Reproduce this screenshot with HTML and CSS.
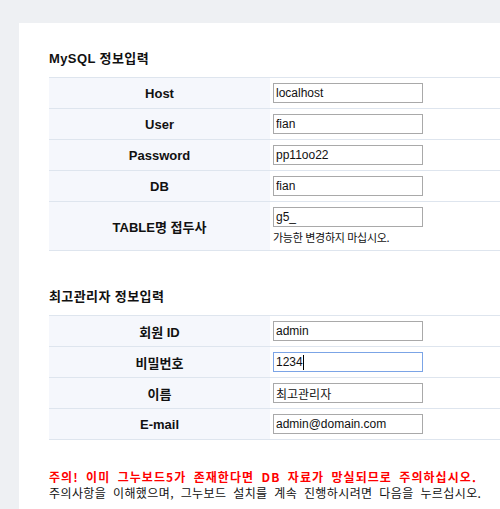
FILE: index.html
```html
<!DOCTYPE html>
<html lang="ko">
<head>
<meta charset="utf-8">
<title>그누보드5 설치</title>
<link rel="stylesheet" href="styles.css">
</head>
<body>
<div class="panel">
  <h2 class="sec-title">MySQL 정보입력</h2>
  <table class="frm">
    <tr><th>Host</th><td><input class="inp" type="text" value="localhost"></td></tr>
    <tr><th>User</th><td><input class="inp" type="text" value="fian"></td></tr>
    <tr><th>Password</th><td><input class="inp" type="text" value="pp11oo22"></td></tr>
    <tr><th>DB</th><td><input class="inp" type="text" value="fian"></td></tr>
    <tr class="tall"><th>TABLE명 접두사</th><td><input class="inp" type="text" value="g5_"><div class="hint">가능한 변경하지 마십시오.</div></td></tr>
  </table>

  <h2 class="sec-title second">최고관리자 정보입력</h2>
  <table class="frm">
    <tr><th>회원 ID</th><td><input class="inp" type="text" value="admin"></td></tr>
    <tr><th>비밀번호</th><td><span class="focus-wrap"><input class="inp focused" type="text" value="1234"><span class="caret"></span></span></td></tr>
    <tr><th>이름</th><td><input class="inp" type="text" value="최고관리자"></td></tr>
    <tr><th>E-mail</th><td><input class="inp" type="text" value="admin@domain.com"></td></tr>
  </table>

  <p class="warn">
    <strong class="warn-red">주의! 이미 그누보드5가 존재한다면 DB 자료가 망실되므로 주의하십시오.</strong><br>
    <span class="warn-normal">주의사항을 이해했으며, 그누보드 설치를 계속 진행하시려면 다음을 누르십시오.</span>
  </p>
</div>
</body>
</html>
```

FILE: styles.css
```css
html, body {
  margin: 0;
  padding: 0;
}
body {
  background: #eef0f3;
  font-family: "Liberation Sans", "Noto Sans CJK KR", sans-serif;
  color: #111;
  overflow: hidden;
  width: 500px;
  height: 509px;
}
.panel {
  margin: 23px 0 0 19px;
  width: 481px;
  height: 486px;
  background: #fff;
  padding: 28px 0 0 30px;
  box-sizing: border-box;
  overflow: hidden;
}
.sec-title {
  margin: 0 0 10px 0;
  font-size: 13px;
  line-height: 16px;
  font-weight: bold;
  letter-spacing: 0.4px;
  color: #111;
}
.sec-title.second {
  margin-top: 38px;
}
.frm {
  border-collapse: collapse;
  width: 451px;
}
.frm th, .frm td {
  border-top: 1px solid #dee5ee;
  border-bottom: 1px solid #dee5ee;
  height: 31px;
  padding: 0;
  box-sizing: border-box;
}
.frm th {
  width: 221px;
  background: #f5f7fc;
  font-size: 13px;
  font-weight: bold;
  text-align: center;
  color: #111;
}
.frm td {
  padding-left: 3px;
  text-align: left;
  vertical-align: middle;
}
.frm tr.tall th, .frm tr.tall td {
  height: 49px;
}
.frm tr.tall td {
  vertical-align: top;
  padding-top: 5px;
}
.inp {
  display: block;
  width: 150px;
  height: 20px;
  box-sizing: border-box;
  border: 1px solid #a9a9a9;
  margin: 0;
  padding: 0 2px;
  font-family: "Liberation Sans", "Noto Sans CJK KR", sans-serif;
  font-size: 12px;
  color: #111;
  background: #fff;
  outline: none;
}
.inp.focused {
  border-color: #7ba4e6;
}
.focus-wrap {
  position: relative;
  display: block;
  width: 150px;
}
.caret {
  position: absolute;
  left: 30px;
  top: 3px;
  width: 1px;
  height: 15px;
  background: #000;
}
.hint {
  font-family: "Noto Sans CJK KR", sans-serif;
  font-size: 11px;
  line-height: 14px;
  margin-top: 3px;
  letter-spacing: -0.3px;
  color: #111;
}
.warn {
  margin: 29px 0 0 0;
  font-family: "Noto Sans CJK KR", sans-serif;
  font-size: 12px;
  line-height: 16px;
  word-spacing: 3px;
  color: #111;
  white-space: nowrap;
}
.warn-red {
  color: #ff0000;
  font-weight: bold;
  letter-spacing: 1.05px;
}
.warn-normal {
  letter-spacing: 0.4px;
}
```
